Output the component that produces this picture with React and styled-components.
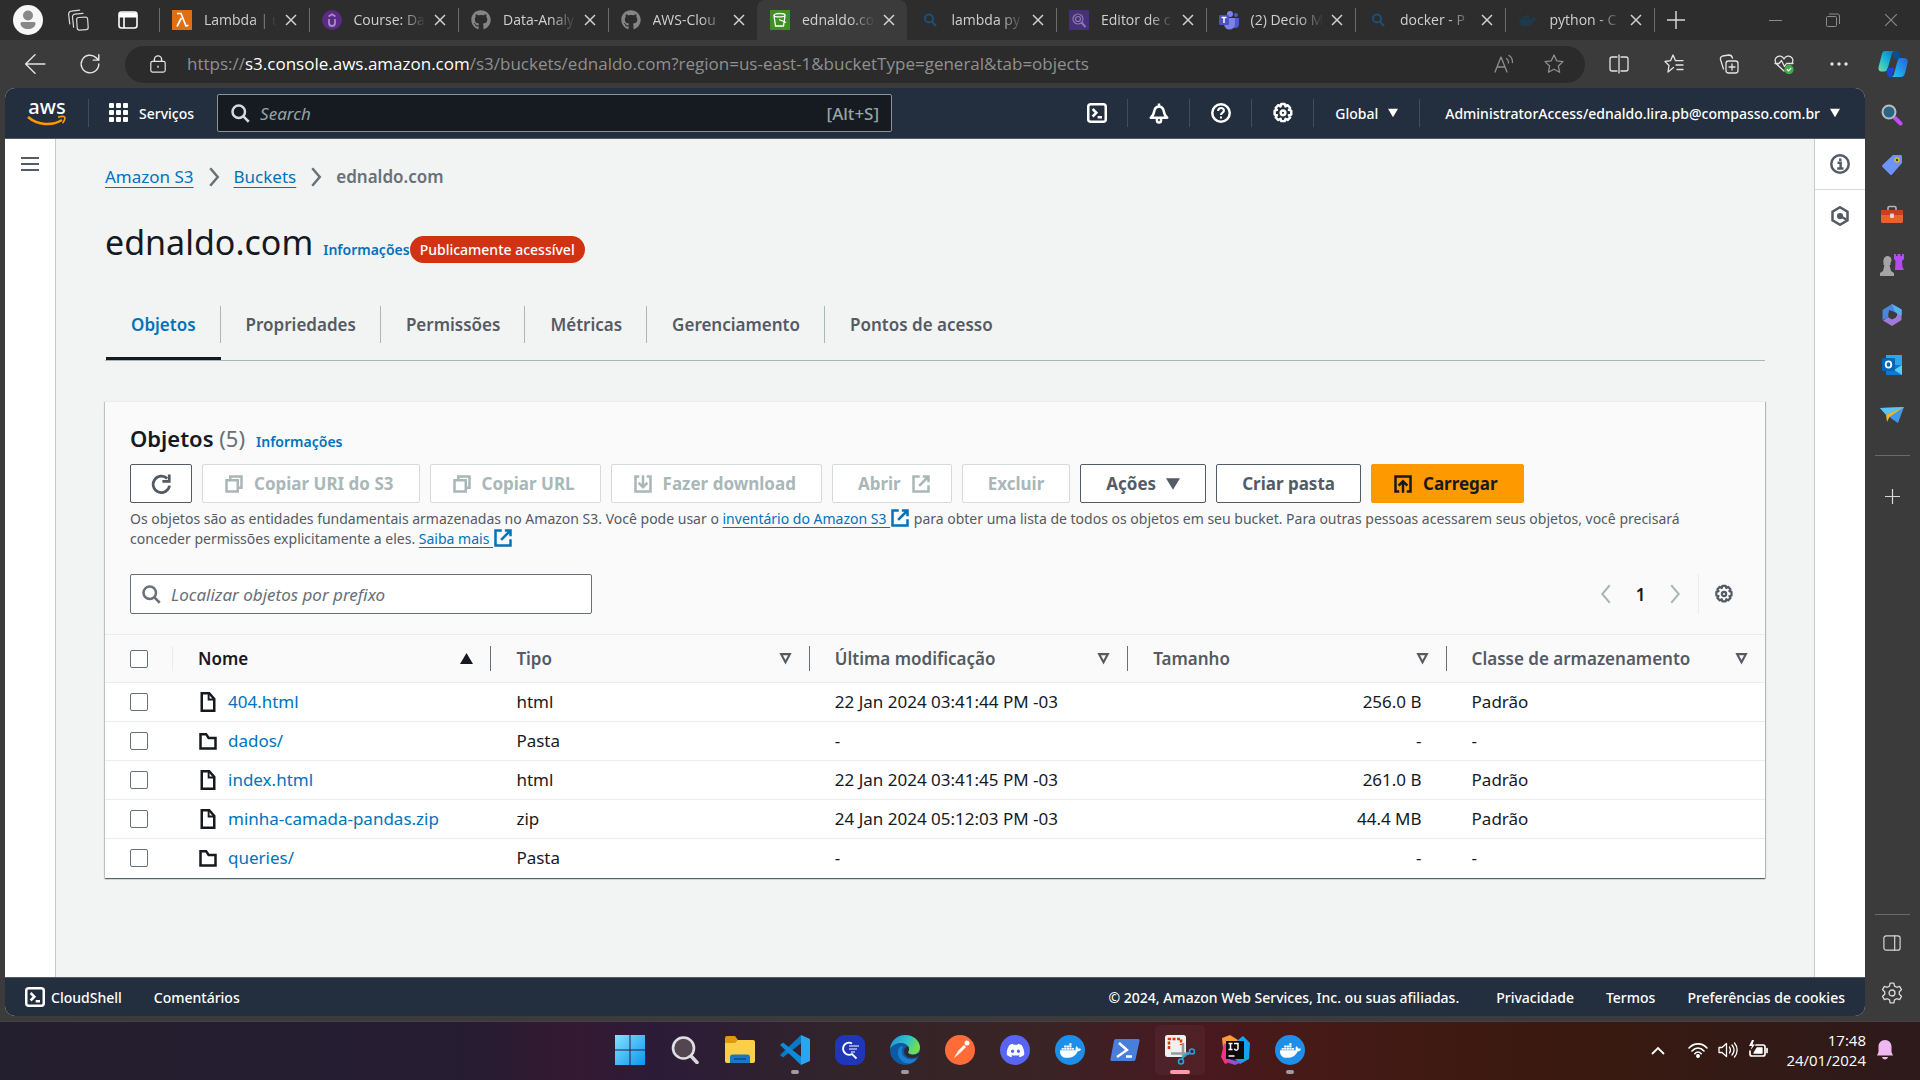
import React from "react";
import styled, { createGlobalStyle, css } from "styled-components";
import { FaGithub, FaDocker, FaDiscord } from "react-icons/fa";

const ember = `"Noto Sans", "Open Sans", sans-serif`;
const segoe = `"Open Sans", "Noto Sans", sans-serif`;

const c = {
  navy: "#232f3e",
  ink: "#16191f",
  grey: "#545b64",
  mid: "#687078",
  link: "#0073bb",
  disabled: "#aab7b8",
  rule: "#eaeded",
  chrome: "#3b3b3b",
};

const GlobalStyle = createGlobalStyle`
  *, *::before, *::after { box-sizing: border-box; }
  body { margin: 0; background: #3b3b3b; font-family: ${ember}; color: ${c.ink}; }
  button { font: inherit; color: inherit; background: none; border: 0; padding: 0; margin: 0; }
  svg { display: block; flex: none; }
  a { color: ${c.link}; text-decoration: none; }
`;

/* ---------- icons ---------- */

const Icon = ({ size = 20, sw = 2, children, ...rest }) => (
  <svg width={size} height={size} viewBox="0 0 16 16" fill="none" stroke="currentColor" strokeWidth={sw} aria-hidden="true" {...rest}>
    {children}
  </svg>
);

const CopyIcon = () => (
  <Icon>
    <path d="M2 5h9v9H2z" />
    <path d="M5 5V2h9v9h-3" />
  </Icon>
);
const DownloadIcon = () => (
  <Icon>
    <path d="M5 2H2v12h12V2h-3" />
    <path d="M8 1v9M4.500 7 8 10.500 11.500 7" />
  </Icon>
);
const UploadIcon = () => (
  <Icon>
    <path d="M5 14H2V2h12v12h-3" />
    <path d="M8 15V6M4.500 9.300 8 5.800l3.500 3.500" />
  </Icon>
);
const ExternalIcon = ({ size }) => (
  <Icon size={size}>
    <path d="M7 2H2v12h12V9" />
    <path d="M9.500 2H14v4.500M14 2 6.500 9.500" />
  </Icon>
);
const RefreshIcon = () => (
  <Icon size={22}>
    <path d="M14.200 9.200A6 6 0 1 1 12.500 4" />
    <path d="M14 1v5H9" />
  </Icon>
);
const SearchIcon = ({ size = 20 }) => (
  <Icon size={size}>
    <circle cx="7" cy="7" r="5" />
    <path d="m10.700 10.700 4.300 4.300" />
  </Icon>
);
const GearIcon = ({ size = 22 }) => (
  <Icon size={size} sw={1.8} strokeLinejoin="round">
    <path d="M6.700 1.500h2.600l.5 1.700 1.500-.9 1.900 1.900-.9 1.500 1.700.6v2.800l-1.700.5.9 1.600-1.900 1.900-1.500-.9-.5 1.700H6.700l-.5-1.700-1.600.9-1.900-1.900.9-1.600-1.700-.5V6.300l1.700-.6-.9-1.500 1.900-1.900 1.600.9z" />
    <circle cx="8" cy="7.900" r="1.700" />
  </Icon>
);
const FileIcon = () => (
  <Icon>
    <path d="M3 1h6l4 4.500V15H3z" />
    <path d="M8.500 1v5H13" strokeWidth="1.500" />
  </Icon>
);
const FolderIcon = () => (
  <Icon>
    <path d="M2 2.500h4.500l2 3H14V14H2z" />
  </Icon>
);
const ShellIcon = () => (
  <Icon>
    <rect x="1" y="1" width="14" height="14" rx="2" />
    <path d="m4.500 4.800 3 3-3 3M8.500 11.300H12" />
  </Icon>
);
const BellIcon = () => (
  <Icon size={22} sw={1.8}>
    <path d="M8 1v1.500M2 11.500c2-1.500 2.300-3.500 2.700-5.500C5.200 4.300 6.300 3.300 8 3.300S10.800 4.300 11.300 6c.4 2 .7 4 2.700 5.500z" strokeLinejoin="round" />
    <path d="M6.500 12v1.500a1.500 1.500 0 0 0 3 0V12" />
  </Icon>
);
const HelpIcon = () => (
  <Icon>
    <circle cx="8" cy="8" r="7" />
    <path d="M5.700 6.300C5.700 4.800 6.700 4 8 4s2.300.8 2.300 2.100C10.300 7.600 8 7.700 8 9.500M8 10.700v1.700" strokeWidth="1.700" />
  </Icon>
);
const InfoIcon = () => (
  <Icon>
    <circle cx="8" cy="8" r="7" />
    <path d="M6 7h2.500v4.500M5.800 11.500h5M7.200 4.500h2" />
  </Icon>
);
const HexIcon = () => (
  <Icon>
    <path d="m8 1 6 3.500v7L8 15l-6-3.500v-7z" />
    <circle cx="8" cy="8" r="1.500" fill="currentColor" />
    <path d="m8.500 8.200 4.500 2.600" />
  </Icon>
);
const Chevron = ({ left, size = 20, sw = 2 }) => (
  <Icon size={size} sw={sw}>
    <path d={left ? "M11 1 5 8l6 7" : "m5 1 6 7-6 7"} />
  </Icon>
);
const Caret = ({ up, hollow, size = 12 }) => (
  <svg width={size} height={size} viewBox="0 0 12 12" aria-hidden="true">
    {hollow ? (
      <path d="M2 2h8L6 9.500z" fill="none" stroke="currentColor" strokeWidth="2" />
    ) : (
      <path d={up ? "M0 11h12L6 1z" : "M0 1h12L6 11z"} fill="currentColor" />
    )}
  </svg>
);
const GridIcon = () => (
  <svg width="20" height="20" viewBox="0 0 20 20" fill="#fff" aria-hidden="true">
    {[0, 7, 14].map((y) => [0, 7, 14].map((x) => <rect key={x + "-" + y} x={x} y={y} width="5" height="5" rx="1" />))}
  </svg>
);

const Thin = ({ size = 20, children, ...rest }) => (
  <svg width={size} height={size} viewBox="0 0 20 20" fill="none" stroke="currentColor" strokeWidth="1.300" strokeLinecap="round" strokeLinejoin="round" aria-hidden="true" {...rest}>
    {children}
  </svg>
);
const CrossIcon = ({ size = 12, sw = 1.5 }) => (
  <svg width={size} height={size} viewBox="0 0 12 12" stroke="currentColor" strokeWidth={sw} aria-hidden="true">
    <path d="m1 1 10 10M11 1 1 11" />
  </svg>
);
const PlusIcon = ({ size = 16 }) => (
  <svg width={size} height={size} viewBox="0 0 16 16" stroke="currentColor" strokeWidth="1.300" aria-hidden="true">
    <path d="M8 0v16M0 8h16" />
  </svg>
);

/* ---------- browser tab strip ---------- */

const Screen = styled.div`
  display: flex;
  flex-direction: column;
  min-height: 100vh;
`;

const TabStrip = styled.div`
  display: flex;
  align-items: center;
  height: 40px;
  background: #2d2d2d;
  color: #d0d0d0;
  font-family: ${segoe};
`;

const StripTools = styled.div`
  display: flex;
  padding: 0 6px 0 3px;
`;

const StripButton = styled.button`
  display: flex;
  align-items: center;
  justify-content: center;
  width: ${(p) => p.$w || 50}px;
  height: 40px;
  color: ${(p) => (p.$dim ? "#8c8c8c" : "#d8d8d8")};
`;

const TabList = styled.div`
  display: flex;
  flex: 1;
  min-width: 0;
`;

const Tab = styled.div`
  display: flex;
  align-items: center;
  gap: 12px;
  flex: 1 1 0;
  min-width: 0;
  height: 40px;
  padding: 0 12px 0 0;
  border-radius: 8px 8px 0 0;
  background: ${(p) => (p.$active ? c.chrome : "transparent")};

  &::before {
    content: "";
    width: 1px;
    height: 24px;
    background: ${(p) => (p.$bare ? "transparent" : "#6c6c6c")};
  }
`;

const TabTitle = styled.button`
  flex: 1 0 0;
  min-width: 0;
  margin-right: -4px;
  text-align: left;
  font-size: 14px;
  line-height: 24px;
  white-space: nowrap;
  mask-image: linear-gradient(90deg, #000 66%, transparent 100%);
`;

const StripRule = styled.span`
  width: 1px;
  height: 24px;
  background: #6c6c6c;
`;

const WindowControls = styled.div`
  display: flex;
  margin-left: 49px;
`;

const Favicon = styled.span`
  display: flex;
  align-items: center;
  justify-content: center;
  flex: none;
  width: 20px;
  height: 20px;
`;

const LambdaFav = () => (
  <svg width="20" height="20" viewBox="0 0 20 20">
    <rect width="20" height="20" fill="#e06f14" />
    <path d="M5 3.500h4L14 16l2.500-.8M9.300 8 5 16.500" fill="none" stroke="#fff" strokeWidth="1.700" />
  </svg>
);
const UdemyFav = () => (
  <svg width="20" height="20" viewBox="0 0 20 20">
    <circle cx="10" cy="10" r="10" fill="#5b2a86" />
    <path d="M7 9v4a3 3 0 0 0 6 0V9M6.500 6.500 10 4.300l3.500 2.200" fill="none" stroke="#a78cc0" strokeWidth="1.800" />
  </svg>
);
const BucketFav = () => (
  <svg width="20" height="20" viewBox="0 0 20 20">
    <rect width="20" height="20" fill="#3f9024" />
    <path d="M4 5.500 5.500 16h8L15 5.500M9 9.500l7 3" fill="none" stroke="#fff" strokeWidth="1.300" />
    <ellipse cx="9.500" cy="5.200" rx="5.500" ry="1.700" fill="none" stroke="#fff" strokeWidth="1.300" />
  </svg>
);
const LensFav = () => (
  <svg width="14" height="14" viewBox="0 0 14 14" fill="none" stroke="#1d4f7c" strokeWidth="2">
    <circle cx="6" cy="5.500" r="4" />
    <path d="m9 8.500 4 4.500" />
  </svg>
);
const AthenaFav = () => (
  <svg width="20" height="20" viewBox="0 0 20 20" fill="none" stroke="#8d7ba8" strokeWidth="1.200">
    <rect width="20" height="20" fill="#46307a" stroke="none" />
    <circle cx="9" cy="9" r="5" />
    <circle cx="9" cy="9" r="2.500" />
    <path d="m12.500 12.500 4 4.500" strokeWidth="2" />
  </svg>
);
const TeamsFav = () => (
  <svg width="20" height="20" viewBox="0 0 20 20">
    <circle cx="11" cy="4" r="3" fill="#7b83eb" />
    <circle cx="17" cy="5" r="2" fill="#5059c9" />
    <path d="M6 8h14v6a4 4 0 0 1-4 4H10z" fill="#5059c9" />
    <path d="M5 8h11v6a5.500 5.500 0 0 1-11 0z" fill="#7b83eb" />
    <rect y="5" width="10" height="10" rx="1" fill="#4b53bc" />
    <path d="M2.500 7.500h5M5 7.500V13" stroke="#fff" strokeWidth="1.500" />
  </svg>
);

const tabs = [
  { title: "Lambda | u", icon: <LambdaFav /> },
  { title: "Course: Da", icon: <UdemyFav /> },
  { title: "Data-Analy", icon: <FaGithub size={20} color="#858585" /> },
  { title: "AWS-Clou", icon: <FaGithub size={20} color="#858585" /> },
  { title: "ednaldo.co", icon: <BucketFav />, active: true },
  { title: "lambda py", icon: <LensFav />, bare: true },
  { title: "Editor de c", icon: <AthenaFav /> },
  { title: "(2) Decio M", icon: <TeamsFav /> },
  { title: "docker - P", icon: <LensFav /> },
  { title: "python - C", icon: <FaDocker size={18} color="#1d3b4e" /> },
];

const Strip = () => (
  <TabStrip>
    <StripTools>
      <StripButton aria-label="Perfil">
        <svg width="30" height="30" viewBox="0 0 30 30">
          <circle cx="15" cy="15" r="15" fill="#f7f7f7" />
          <circle cx="15" cy="10.500" r="5" fill="#888" />
          <path d="M7.500 18.500a1.500 1.500 0 0 1 1.500-1.500h12a1.500 1.500 0 0 1 1.500 1.500c0 3.500-3.500 5.500-7.500 5.500s-7.500-2-7.500-5.500z" fill="#888" />
        </svg>
      </StripButton>
      <StripButton aria-label="Workspaces">
        <Thin size={22} strokeWidth="1.100">
          <rect x="9" y="7.500" width="10" height="11.500" rx="2" transform="rotate(-4 14 13)" />
          <path d="M6 16.500 5 7.500A2.500 2.500 0 0 1 7.200 4.700L14.500 4M2.500 13.500 1.500 5A2.700 2.700 0 0 1 4 2l7.500-1" />
        </Thin>
      </StripButton>
      <StripButton aria-label="Guias verticais">
        <svg width="20" height="20" viewBox="0 0 20 20" fill="none" stroke="#fff" strokeWidth="1.600">
          <rect x="1" y="2" width="18" height="16" rx="2.500" />
          <path d="M1 5h18" strokeWidth="5" />
          <path d="M6 5v13" />
        </svg>
      </StripButton>
    </StripTools>
    <TabList role="tablist" aria-label="Guias do navegador">
      {tabs.map((t) => (
        <Tab key={t.title} $active={t.active} $bare={t.active || t.bare}>
          <Favicon>{t.icon}</Favicon>
          <TabTitle role="tab" aria-selected={!!t.active}>
            {t.title}
          </TabTitle>
          <button aria-label="Fechar guia">
            <CrossIcon />
          </button>
        </Tab>
      ))}
    </TabList>
    <StripRule />
    <StripButton $w={42} aria-label="Nova guia">
      <PlusIcon size={18} />
    </StripButton>
    <WindowControls>
      <StripButton $w={58} $dim aria-label="Minimizar">
        <svg width="13" height="13" viewBox="0 0 13 13" stroke="currentColor">
          <path d="M0 6.500h13" />
        </svg>
      </StripButton>
      <StripButton $w={58} $dim aria-label="Restaurar">
        <svg width="14" height="14" viewBox="0 0 14 14" fill="none" stroke="currentColor">
          <rect x=".5" y="3.500" width="10" height="10" rx="1" />
          <path d="M3 1h8.500a2 2 0 0 1 2 2v8" />
        </svg>
      </StripButton>
      <StripButton $w={58} $dim aria-label="Fechar">
        <CrossIcon size={14} sw={0.9} />
      </StripButton>
    </WindowControls>
  </TabStrip>
);

/* ---------- address bar ---------- */

const Toolbar = styled.div`
  display: flex;
  align-items: center;
  height: 48px;
  padding-left: 7px;
  background: ${c.chrome};
  color: #e4e4e4;
  font-family: ${segoe};
`;

const ToolButton = styled.button`
  display: flex;
  align-items: center;
  justify-content: center;
  width: ${(p) => p.$w || 55}px;
  height: 37px;
  color: ${(p) => (p.$dim ? "#8f8f8f" : "inherit")};
`;

const Address = styled.div`
  display: flex;
  align-items: center;
  flex: 1;
  min-width: 0;
  height: 37px;
  margin: 0 6px 0 8px;
  padding: 0 6px 0 24px;
  border-radius: 19px;
  background: #2b2b2b;
`;

const Url = styled.div`
  flex: 1;
  min-width: 0;
  margin-left: 20px;
  overflow: hidden;
  white-space: nowrap;
  font-size: 17px;
  line-height: 30px;
  color: #909090;

  strong {
    font-weight: 400;
    color: #fff;
  }
`;

const AddressBar = () => (
  <Toolbar>
    <ToolButton aria-label="Voltar">
      <Thin size={22}>
        <path d="M19 10H1.500M10 1.500 1.500 10l8.500 8.500" />
      </Thin>
    </ToolButton>
    <ToolButton aria-label="Atualizar">
      <Thin size={22}>
        <path d="M18 10a8 8 0 1 1-2.500-5.800L18 6.500M18 1.500v5h-5" />
      </Thin>
    </ToolButton>
    <Address>
      <Thin size={18}>
        <rect x="2" y="7" width="16" height="12" rx="2" />
        <path d="M6 7V5a4 4 0 0 1 8 0v2M10 12.500v1" strokeWidth="1.600" />
      </Thin>
      <Url role="textbox" aria-label="Endereço">
        https://<strong>s3.console.aws.amazon.com</strong>/s3/buckets/ednaldo.com?region=us-east-1&amp;bucketType=general&amp;tab=objects
      </Url>
      <ToolButton $w={50} $dim aria-label="Ler em voz alta">
        <Thin>
          <path d="M1 18 7 3l6 15M3 13h8M12.500 4.500c1.500 1 2 2.500 2 4.500M15 1.500c2.500 1.500 3.500 4 3.500 7" />
        </Thin>
      </ToolButton>
      <ToolButton $w={50} $dim aria-label="Adicionar aos favoritos">
        <Thin>
          <path d="m10 1 2.700 5.800 6.300.8-4.600 4.400 1.200 6.300L10 15.200l-5.600 3.100L5.600 12 1 7.600l6.300-.8z" />
        </Thin>
      </ToolButton>
    </Address>
    <ToolButton aria-label="Dividir tela">
      <Thin>
        <path d="M8 3H3a2 2 0 0 0-2 2v10a2 2 0 0 0 2 2h5M12 3h5a2 2 0 0 1 2 2v10a2 2 0 0 1-2 2h-5M10 1v18" />
      </Thin>
    </ToolButton>
    <ToolButton aria-label="Favoritos">
      <Thin>
        <path d="M9.500 13.500 4 18l1-6.500L1 7.500l5.500-.8L9 1l2.500 5.700H19M12 11h7M13 15.500h6" />
      </Thin>
    </ToolButton>
    <ToolButton aria-label="Coleções">
      <Thin>
        <rect x="7" y="7" width="12" height="12" rx="2.500" />
        <path d="M13 10v6M10 13h6M4.500 15 1.500 5.500A3 3 0 0 1 3.500 2L10 1c2 0 3 1 3.500 3" />
      </Thin>
    </ToolButton>
    <ToolButton aria-label="Desempenho">
      <Thin>
        <path d="M10 17 2 9.500C-.5 5 3 1.500 6.500 2.200 8.500 2.600 9.500 4 10 5c.5-1 1.500-2.400 3.500-2.800C17 1.500 20.500 5 18 9.500M1 9.500h4l2.500-3 3 6 2-3H19" />
        <circle cx="15" cy="15.500" r="4" fill="#3fae49" stroke="#3fae49" />
        <path d="m13.200 15.500 1.300 1.400 2.300-2.500" stroke="#fff" />
      </Thin>
    </ToolButton>
    <ToolButton aria-label="Mais">
      <svg width="18" height="4" viewBox="0 0 18 4" fill="currentColor">
        <circle cx="2" cy="2" r="1.700" />
        <circle cx="9" cy="2" r="1.700" />
        <circle cx="16" cy="2" r="1.700" />
      </svg>
    </ToolButton>
    <ToolButton $w={54} aria-label="Copilot">
      <svg width="30" height="28" viewBox="0 0 30 28">
        <defs>
          <linearGradient id="cp1" x1="0" y1="1" x2="1" y2="0">
            <stop offset="0" stopColor="#6fe09a" />
            <stop offset=".5" stopColor="#18b5d8" />
            <stop offset="1" stopColor="#0a6fc2" />
          </linearGradient>
          <linearGradient id="cp2" x1="0" y1="1" x2="1" y2="0">
            <stop offset="0" stopColor="#22c8f6" />
            <stop offset="1" stopColor="#2264d8" />
          </linearGradient>
        </defs>
        <path d="M13 1h6c2 0 3 2 3.500 5l.5 3h-6z" fill="#0d4f8c" />
        <path d="M7 1h10c-2 0-2.700 1-3.200 3l-4 14c-.7 2.500-1.600 3.500-3.300 3.500H4c-3 0-4-2-3.300-5L4 4c.5-2 1.500-3 3-3z" fill="url(#cp1)" />
        <path d="m8.500 21 1-3h7l-3 9H12c-2 0-3-1.500-3.500-6z" fill="#1a45d6" />
        <path d="M23 27H13c1.500 0 2.500-1 3-3l3.500-13c.5-2 1.500-3 3-3h3.500c3 0 4.500 2 3.500 5L27 23c-.6 2.500-2 4-4 4z" fill="url(#cp2)" />
      </svg>
    </ToolButton>
  </Toolbar>
);

/* ---------- side bar of the browser ---------- */

const Middle = styled.div`
  display: flex;
  flex: 1;
  padding-left: 5px;
  background: ${c.chrome};
`;

const SideBar = styled.aside`
  display: flex;
  flex-direction: column;
  align-items: center;
  width: 55px;
  padding: 2px 1px 3px 0;
  color: #d8d8d8;
`;

const SideButton = styled.button`
  display: flex;
  align-items: center;
  justify-content: center;
  width: 54px;
  height: 50px;
`;

const SideRule = styled.hr`
  width: 35px;
  height: 1px;
  margin: ${(p) => (p.$tight ? "0 0 3px" : "15px 0")};
  border: 0;
  background: #6a6a6a;
`;

const SideSpacer = styled.div`
  flex: 1;
`;

const Side = () => (
  <SideBar>
    <SideButton aria-label="Pesquisar">
      <svg width="22" height="22" viewBox="0 0 22 22">
        <path d="m14 14 5.500 5.500" stroke="#c04cf5" strokeWidth="4" strokeLinecap="round" />
        <circle cx="8" cy="8" r="6.500" fill="#2a6585" stroke="#b9bdc0" strokeWidth="2" />
      </svg>
    </SideButton>
    <SideButton aria-label="Compras">
      <svg width="22" height="22" viewBox="0 0 22 22">
        <path d="M12 1h7c1.500 0 2 .5 2 2v6L11 20.500c-.6.7-1.200.7-2 0L1.500 13c-.6-.7-.6-1.300 0-2z" fill="#6c93f5" />
        <circle cx="16" cy="6" r="2" fill="#3b3b3b" stroke="#f2b51c" strokeWidth="1.500" />
      </svg>
    </SideButton>
    <SideButton aria-label="Ferramentas">
      <svg width="24" height="20" viewBox="0 0 24 20">
        <path d="M8 6V3a1.500 1.500 0 0 1 1.500-1.500h5A1.500 1.500 0 0 1 16 3v3" fill="none" stroke="#b4b4b4" strokeWidth="1.600" />
        <rect x="1" y="5" width="22" height="13" rx="1.500" fill="#e8622f" />
        <rect x="1" y="5" width="22" height="5" rx="1" fill="#c8401c" />
        <rect x="10" y="8.500" width="4" height="4.500" rx="1" fill="#d8d8d8" />
      </svg>
    </SideButton>
    <SideButton aria-label="Jogos">
      <svg width="24" height="24" viewBox="0 0 24 24">
        <path d="M14 1h2v2h1.500V1h3v2H22V1h2v5l-2 2 .5 6 1.500 3h-9l.5-9L14 6z" fill="#b24cf0" />
        <path d="M3.500 7a4 4 0 1 1 7 2.700V12h-1l1.500 6 3 2v3H0v-3l3-2 1.500-6h-1V9.700A4 4 0 0 1 3.500 7z" fill="#a5a5a5" />
      </svg>
    </SideButton>
    <SideButton aria-label="Microsoft 365">
      <svg width="22" height="22" viewBox="0 0 22 22">
        <path d="m11 0 9.500 5.500v6L14 8.500 8 6 7.500 13 1.500 16V6z" fill="#4a86dc" />
        <path d="M20.500 5.500V16L11 22l-9-5.500 6-4 3 2.500 5-3V8z" fill="#a07ad8" />
        <path d="m11 0 9.500 5.500v6L14 8z" fill="#53b4ec" />
        <path d="m11 7 4 2v4.500l-4 2-3.500-2V9z" fill="#3b3b3b" />
      </svg>
    </SideButton>
    <SideButton aria-label="Outlook">
      <svg width="22" height="22" viewBox="0 0 22 22">
        <rect x="5" y="1" width="16" height="12" fill="#28a8ea" />
        <path d="M5 11h16v10H5z" fill="#0f78d4" />
        <path d="m21 11-8 5 8 5z" fill="#50d0ff" />
        <rect x="1" y="4" width="13" height="13" rx="1" fill="#0364b8" />
        <ellipse cx="7.500" cy="10.500" rx="2.800" ry="3.200" fill="none" stroke="#fff" strokeWidth="1.800" />
      </svg>
    </SideButton>
    <SideButton aria-label="Drop">
      <svg width="24" height="18" viewBox="0 0 24 18">
        <path d="M0 2 24 1 18 17l-6-4z" fill="#3f9bea" />
        <path d="M0 2 24 1 6 9z" fill="#5cc4f5" />
        <path d="M24 1 6 9l1 7 2.500-5z" fill="#f2b51c" />
      </svg>
    </SideButton>
    <SideRule />
    <SideButton aria-label="Personalizar">
      <PlusIcon size={15} />
    </SideButton>
    <SideSpacer />
    <SideRule $tight />
    <SideButton aria-label="Painel lateral">
      <Thin size={18}>
        <rect x="1" y="2" width="18" height="16" rx="2.500" />
        <path d="M13 2v16" />
      </Thin>
    </SideButton>
    <SideButton aria-label="Configurações">
      <Thin size={22} strokeWidth="1.200">
        <path d="M8.300 1h3.400l.6 2.700 2 1.100 2.600-.8 1.700 3-2 1.800v2.400l2 1.800-1.700 3-2.600-.8-2 1.100-.6 2.700H8.300l-.6-2.700-2-1.100-2.600.8-1.700-3 2-1.800V8.800l-2-1.800 1.700-3 2.600.8 2-1.100z" />
        <circle cx="10" cy="10" r="2.700" />
      </Thin>
    </SideButton>
  </SideBar>
);

/* ---------- AWS console frame ---------- */

const Frame = styled.div`
  display: flex;
  flex-direction: column;
  flex: 1;
  min-width: 0;
  margin-bottom: 5px;
  overflow: hidden;
  border-radius: 10px;
  background: #f2f3f3;
`;

const Header = styled.header`
  display: flex;
  align-items: center;
  height: 51px;
  padding-left: 22px;
  border-bottom: 1px solid ${c.grey};
  background: ${c.navy};
  color: #fff;
  font-size: 14px;
  font-weight: 500;
`;

const Logo = styled.a`
  display: flex;
  flex-direction: column;
  align-items: center;
  width: 40px;
  color: #fff;
  font-size: 20px;
  font-weight: 500;
  line-height: 16px;
`;

const Services = styled.button`
  display: flex;
  align-items: center;
  gap: 10px;
  height: 28px;
  margin-left: 21px;
  padding: 0 23px 0 20px;
  border-left: 1px solid #414d5c;
`;

const HeaderSearch = styled.label`
  display: flex;
  align-items: center;
  flex: 1;
  max-width: 675px;
  height: 38px;
  padding: 0 12px;
  border: 1px solid #879596;
  border-radius: 2px;
  background: #161a21;
  color: #95a5a6;
  font-size: 17px;

  svg {
    color: #d5dbdb;
  }
`;

const PlainInput = styled.input`
  flex: 1;
  min-width: 0;
  height: 36px;
  margin-left: 10px;
  padding: 0;
  border: 0;
  outline: 0;
  background: transparent;
  color: inherit;
  font-family: inherit;
  font-size: 17px;

  &::placeholder {
    color: inherit;
    font-style: italic;
    opacity: 1;
  }
`;

const HeaderNav = styled.nav`
  display: flex;
  margin-left: auto;
`;

const HeaderItem = styled.button`
  display: flex;
  align-items: center;
  justify-content: center;
  gap: 10px;
  height: 28px;
  min-width: 62px;
  padding: 0 ${(p) => p.$pad || 0}px;
  border-right: ${(p) => (p.$last ? "0" : "1px solid #414d5c")};
  white-space: nowrap;
`;

const Body = styled.div`
  display: flex;
  flex: 1;
`;

const Rail = styled.div`
  width: 51px;
  background: #fff;
  border: 0 solid #c5cbcc;
  border-${(p) => p.$edge}-width: 1px;
`;

const RailButton = styled.button`
  display: flex;
  align-items: center;
  justify-content: center;
  width: 100%;
  height: 51px;
  color: ${c.grey};
  border-bottom: ${(p) => (p.$line ? "1px solid #d5dbdb" : "0")};
`;

const Main = styled.main`
  flex: 1;
  min-width: 0;
  padding: 25px 49px 60px;
`;

const Crumbs = styled.nav`
  display: flex;
  align-items: center;
  gap: 10px;
  font-size: 17px;
  line-height: 25px;
  color: ${c.mid};

  a {
    text-decoration: underline;
    text-underline-offset: 4px;
  }
  strong {
    font-weight: 600;
  }
`;

const TitleRow = styled.div`
  display: flex;
  align-items: baseline;
  margin-top: 31px;
`;

const Title = styled.h1`
  margin: 0 10px 0 0;
  font-size: 34px;
  font-weight: 400;
  line-height: 45px;
`;

const InfoLink = styled.a`
  font-size: 14px;
  font-weight: 600;
  line-height: 20px;
`;

const Badge = styled.span`
  padding: 0 10px;
  border-radius: 14px;
  background: #d13212;
  color: #fff;
  font-size: 14px;
  font-weight: 500;
  line-height: 27px;
`;

const PageTabs = styled.div`
  display: flex;
  align-items: stretch;
  height: 71px;
  margin-top: 25px;
  padding-left: 1px;
  border-bottom: 1px solid #aab7b8;
`;

const PageTab = styled.button`
  display: flex;
  align-items: center;
  padding-top: 2px;
  color: ${(p) => (p.$active ? c.link : c.grey)};
  font-size: 17px;
  font-weight: 600;
  border-bottom: 3px solid ${(p) => (p.$active ? c.ink : "transparent")};

  span {
    padding: 0 24px 0 25px;
    line-height: 37px;
    border-right: ${(p) => (p.$last ? "0" : "1px solid #aab7b8")};
  }
`;

const Card = styled.section`
  margin-top: 40px;
  border-top: 1px solid ${c.rule};
  background: #fff;
  box-shadow: 0 1px 1px 0 rgba(0, 28, 36, 0.5), 1px 1px 1px 0 rgba(0, 28, 36, 0.2), -1px 1px 1px 0 rgba(0, 28, 36, 0.15);
`;

const CardHead = styled.div`
  padding: 21px 25px 20px;
  background: #fafafa;
`;

const CardTitle = styled.h2`
  display: inline;
  margin: 0 11px 0 0;
  font-size: 22px;
  font-weight: 600;
  line-height: 30px;

  span {
    font-weight: 400;
    color: ${c.mid};
  }
`;

const Actions = styled.div`
  display: flex;
  flex-wrap: wrap;
  gap: 10px;
  margin-top: 11px;
`;

const variants = {
  normal: css`
    border-color: ${c.grey};
    color: ${c.grey};
  `,
  disabled: css`
    border-color: #d5dbdb;
    color: ${c.disabled};
  `,
  primary: css`
    border-color: #ff9900;
    background: #ff9900;
    color: ${c.ink};
  `,
};

const Button = styled.button`
  display: flex;
  align-items: center;
  gap: 10px;
  height: 39px;
  padding-left: ${(p) => (p.$icon === "start" ? 21 : p.$icon === "only" ? 19 : 25)}px;
  padding-right: ${(p) => (p.$icon === "end" ? 20 : p.$icon === "only" ? 19 : 25)}px;
  border: 1px solid;
  border-radius: 2px;
  background: #fff;
  font-size: 17px;
  font-weight: 700;
  line-height: 24px;
  white-space: nowrap;
  ${(p) => variants[p.$variant || "normal"]}
`;

const Description = styled.p`
  margin: 6px 0 0;
  color: ${c.grey};
  font-size: 14px;
  line-height: 20px;

  a {
    text-decoration: underline;
    text-underline-offset: 3px;
  }
  svg {
    display: inline-block;
    margin: -5px 0;
    vertical-align: 1px;
  }
`;

const FilterRow = styled.div`
  display: flex;
  align-items: center;
  justify-content: space-between;
  margin-top: 25px;
`;

const Filter = styled.label`
  display: flex;
  align-items: center;
  width: 462px;
  height: 40px;
  padding: 0 10px;
  border: 1px solid ${c.mid};
  border-radius: 2px;
  background: #fff;
  color: ${c.mid};
`;

const Pager = styled.div`
  display: flex;
  align-items: center;
  color: ${c.disabled};
  font-size: 17px;

  strong {
    width: 49px;
    text-align: center;
    font-weight: 600;
    color: ${c.ink};
  }
`;

const PagerGear = styled.button`
  display: flex;
  align-items: center;
  height: 40px;
  margin-left: 13px;
  padding: 0 6px 0 15px;
  border-left: 1px solid ${c.rule};
  color: ${c.grey};
`;

const Table = styled.table`
  width: 100%;
  table-layout: fixed;
  border-collapse: collapse;
  font-size: 17px;

  th {
    height: 48px;
    padding: 0;
    background: #fafafa;
    border-top: 1px solid ${c.rule};
    border-bottom: 1px solid ${c.rule};
    text-align: left;
  }
  td {
    height: 39px;
    padding: 0 25px;
    border-top: 1px solid ${c.rule};
    line-height: 24px;
    white-space: nowrap;
  }
`;

const CheckCol = styled.col`
  width: 68px;
`;

const HeadCell = styled.div`
  display: flex;
  align-items: center;
  justify-content: space-between;
  height: 25px;
  padding: 0 17px 0 25px;
  border-right: ${(p) => (p.$rule ? `1px solid ${p.$rule}` : "0")};
  color: ${(p) => (p.$sorted ? c.ink : c.grey)};
  font-weight: 600;
`;

const Check = styled.input`
  display: block;
  appearance: none;
  flex: none;
  width: 18px;
  height: 18px;
  margin: 0;
  border: 1px solid ${c.mid};
  border-radius: 2px;
  background: #fff;
`;

const NameCell = styled.div`
  display: flex;
  align-items: center;
  gap: 10px;
`;

const NumberCell = styled.td`
  text-align: right;
`;

const Footer = styled.footer`
  display: flex;
  align-items: center;
  height: 39px;
  padding: 0 20px;
  border-top: 1px solid ${c.grey};
  background: ${c.navy};
  color: #fff;
  font-size: 14px;
  font-weight: 500;

  a,
  button {
    display: flex;
    align-items: center;
    gap: 6px;
    margin-right: 32px;
    color: #fff;
  }
  a:last-child {
    margin-right: 0;
  }
`;

const Copyright = styled.span`
  margin: 0 37px 0 auto;
`;

const columns = ["Nome", "Tipo", "Última modificação", "Tamanho", "Classe de armazenamento"];
const rows = [
  ["404.html", "html", "22 Jan 2024 03:41:44 PM -03", "256.0 B", "Padrão"],
  ["dados/", "Pasta", "-", "-", "-"],
  ["index.html", "html", "22 Jan 2024 03:41:45 PM -03", "261.0 B", "Padrão"],
  ["minha-camada-pandas.zip", "zip", "24 Jan 2024 05:12:03 PM -03", "44.4 MB", "Padrão"],
  ["queries/", "Pasta", "-", "-", "-"],
];
const pageTabs = ["Objetos", "Propriedades", "Permissões", "Métricas", "Gerenciamento", "Pontos de acesso"];

const ConsoleHeader = () => (
  <Header>
    <Logo href="#" aria-label="AWS">
      <span>aws</span>
      <svg width="40" height="12" viewBox="0 0 40 12" fill="none" stroke="#ff9900">
        <path d="M1 2c10 8.500 24 9 34 3" strokeWidth="2.600" />
        <path d="M31 2.200c3-.9 6-.8 6.700 0 .7 1-.4 4-2.200 6" strokeWidth="1.600" />
      </svg>
    </Logo>
    <Services>
      <GridIcon />
      Serviços
    </Services>
    <HeaderSearch>
      <SearchIcon />
      <PlainInput type="search" placeholder="Search" aria-label="Search" />
      [Alt+S]
    </HeaderSearch>
    <HeaderNav>
      <HeaderItem aria-label="CloudShell">
        <ShellIcon />
      </HeaderItem>
      <HeaderItem aria-label="Notificações">
        <BellIcon />
      </HeaderItem>
      <HeaderItem aria-label="Ajuda">
        <HelpIcon />
      </HeaderItem>
      <HeaderItem aria-label="Configurações">
        <GearIcon />
      </HeaderItem>
      <HeaderItem $pad={21}>
        Global <Caret size={10} />
      </HeaderItem>
      <HeaderItem $pad={25} $last>
        AdministratorAccess/ednaldo.lira.pb@compasso.com.br <Caret size={10} />
      </HeaderItem>
    </HeaderNav>
  </Header>
);

const ObjectsTable = () => (
  <Table>
    <colgroup>
      <CheckCol />
      {columns.map((name) => (
        <col key={name} />
      ))}
    </colgroup>
    <thead>
      <tr>
        <th>
          <HeadCell $rule={c.rule}>
            <Check type="checkbox" aria-label="Selecionar todos" />
          </HeadCell>
        </th>
        {columns.map((name, i) => (
          <th key={name} scope="col">
            <HeadCell $sorted={i === 0} $rule={i < 4 ? c.mid : null}>
              {name}
              <Caret up={i === 0} hollow={i > 0} size={13} />
            </HeadCell>
          </th>
        ))}
      </tr>
    </thead>
    <tbody>
      {rows.map(([name, type, date, size, storage]) => (
        <tr key={name}>
          <td>
            <Check type="checkbox" aria-label={`Selecionar ${name}`} />
          </td>
          <td>
            <NameCell>
              {type === "Pasta" ? <FolderIcon /> : <FileIcon />}
              <a href="#">{name}</a>
            </NameCell>
          </td>
          <td>{type}</td>
          <td>{date}</td>
          <NumberCell>{size}</NumberCell>
          <td>{storage}</td>
        </tr>
      ))}
    </tbody>
  </Table>
);

const Console = () => (
  <Frame>
    <ConsoleHeader />
    <Body>
      <Rail $edge="right">
        <RailButton aria-label="Menu">
          <svg width="18" height="16" viewBox="0 0 18 16" stroke="currentColor" strokeWidth="2">
            <path d="M0 1h18M0 7h18M0 13h18" />
          </svg>
        </RailButton>
      </Rail>
      <Main>
        <Crumbs aria-label="Trilha">
          <a href="#">Amazon S3</a>
          <Chevron />
          <a href="#">Buckets</a>
          <Chevron />
          <strong>ednaldo.com</strong>
        </Crumbs>
        <TitleRow>
          <Title>ednaldo.com</Title>
          <InfoLink href="#">Informações</InfoLink>
          <Badge>Publicamente acessível</Badge>
        </TitleRow>
        <PageTabs role="tablist">
          {pageTabs.map((name, i) => (
            <PageTab key={name} role="tab" aria-selected={i === 0} $active={i === 0} $last={i === 5}>
              <span>{name}</span>
            </PageTab>
          ))}
        </PageTabs>
        <Card>
          <CardHead>
            <CardTitle>
              Objetos <span>(5)</span>
            </CardTitle>
            <InfoLink href="#">Informações</InfoLink>
            <Actions>
              <Button $icon="only" aria-label="Atualizar">
                <RefreshIcon />
              </Button>
              <Button $variant="disabled" disabled $icon="start">
                <CopyIcon /> Copiar URI do S3
              </Button>
              <Button $variant="disabled" disabled $icon="start">
                <CopyIcon /> Copiar URL
              </Button>
              <Button $variant="disabled" disabled $icon="start">
                <DownloadIcon /> Fazer download
              </Button>
              <Button $variant="disabled" disabled $icon="end">
                Abrir <ExternalIcon />
              </Button>
              <Button $variant="disabled" disabled>
                Excluir
              </Button>
              <Button>
                Ações <Caret size={14} />
              </Button>
              <Button>Criar pasta</Button>
              <Button $variant="primary" $icon="start">
                <UploadIcon /> Carregar
              </Button>
            </Actions>
            <Description>
              Os objetos são as entidades fundamentais armazenadas no Amazon S3. Você pode usar o{" "}
              <a href="#">
                inventário do Amazon S3 <ExternalIcon size={20} />
              </a>{" "}
              para obter uma lista de todos os objetos em seu bucket. Para outras pessoas acessarem seus objetos, você precisará
              conceder permissões explicitamente a eles.{" "}
              <a href="#">
                Saiba mais <ExternalIcon size={20} />
              </a>
            </Description>
            <FilterRow>
              <Filter>
                <SearchIcon />
                <PlainInput type="search" placeholder="Localizar objetos por prefixo" aria-label="Localizar objetos por prefixo" />
              </Filter>
              <Pager>
                <button aria-label="Página anterior">
                  <Chevron left sw={1.6} />
                </button>
                <strong>1</strong>
                <button aria-label="Próxima página">
                  <Chevron sw={1.6} />
                </button>
                <PagerGear aria-label="Preferências">
                  <GearIcon size={20} />
                </PagerGear>
              </Pager>
            </FilterRow>
          </CardHead>
          <ObjectsTable />
        </Card>
      </Main>
      <Rail $edge="left">
        <RailButton $line aria-label="Informações">
          <InfoIcon />
        </RailButton>
        <RailButton aria-label="Tutoriais">
          <HexIcon />
        </RailButton>
      </Rail>
    </Body>
    <Footer>
      <button>
        <ShellIcon /> CloudShell
      </button>
      <a href="#">Comentários</a>
      <Copyright>© 2024, Amazon Web Services, Inc. ou suas afiliadas.</Copyright>
      <a href="#">Privacidade</a>
      <a href="#">Termos</a>
      <a href="#">Preferências de cookies</a>
    </Footer>
  </Frame>
);

/* ---------- Windows taskbar ---------- */

const Taskbar = styled.div`
  display: grid;
  grid-template-columns: 1fr auto 1fr;
  align-items: center;
  height: 59px;
  padding-bottom: 2px;
  border-top: 1px solid #4a3f48;
  background: linear-gradient(
    90deg,
    #241f2e 0%,
    #251c31 24%,
    #341a32 30%,
    #2c1b38 34%,
    #32242a 44%,
    #3a2425 54%,
    #48181f 62%,
    #461a17 68%,
    #39190f 82%,
    #2d1a1b 100%
  );
  color: #fff;
  font-family: ${segoe};
`;

const Apps = styled.div`
  display: flex;
  grid-column: 2;
  gap: 5px;
`;

const AppButton = styled.button`
  position: relative;
  display: flex;
  align-items: center;
  justify-content: center;
  width: 50px;
  height: 50px;
  border-radius: 5px;
  background: ${(p) => (p.$state === "focus" ? "rgba(255,255,255,.04)" : "transparent")};

  &::after {
    content: "";
    position: absolute;
    bottom: 1px;
    width: ${(p) => (p.$state === "focus" ? 20 : p.$state === "open" ? 8 : 0)}px;
    height: 4px;
    border-radius: 2px;
    background: ${(p) => (p.$state === "focus" ? "#ff99a4" : "#a49a9c")};
  }
`;

const Disc = styled.span`
  display: flex;
  align-items: center;
  justify-content: center;
  width: 30px;
  height: 30px;
  border-radius: ${(p) => p.$r || "50%"};
  background: ${(p) => p.$bg};
`;

const Tray = styled.div`
  display: flex;
  align-items: center;
  justify-content: flex-end;
  gap: 10px;
  padding-right: 26px;
`;

const TrayChevron = styled.button`
  margin-right: 13px;
`;

const Clock = styled.div`
  margin-left: 8px;
  font-size: 15px;
  line-height: 20px;
  text-align: right;
`;

const dockerDisc = (
  <Disc $bg="#1d8fe8">
    <FaDocker size={21} color="#fff" />
  </Disc>
);

const apps = [
  {
    name: "Iniciar",
    icon: (
      <svg width="30" height="30" viewBox="0 0 30 30">
        <defs>
          <linearGradient id="win" x1="0" y1="0" x2="1" y2="1">
            <stop offset="0" stopColor="#84e0ff" />
            <stop offset="1" stopColor="#0a96ee" />
          </linearGradient>
        </defs>
        <path d="M0 0h14.500v14.500H0zM15.500 0H30v14.500H15.500zM0 15.500h14.500V30H0zM15.500 15.500H30V30H15.500z" fill="url(#win)" />
      </svg>
    ),
  },
  {
    name: "Pesquisar",
    icon: (
      <svg width="28" height="28" viewBox="0 0 28 28">
        <path d="m20 20 6 6.500" stroke="#d8d8dc" strokeWidth="3.500" strokeLinecap="round" />
        <circle cx="12.500" cy="12" r="10.500" fill="#544650" stroke="#dfdfe3" strokeWidth="2.600" />
      </svg>
    ),
  },
  {
    name: "Explorador de Arquivos",
    icon: (
      <svg width="30" height="28" viewBox="0 0 30 28">
        <path d="M0 2a2 2 0 0 1 2-2h8l3 4v5H0z" fill="#dc9a0c" />
        <path d="M0 7h10l3-3h15a2 2 0 0 1 2 2v19a2 2 0 0 1-2 2H2a2 2 0 0 1-2-2z" fill="#fdcf48" />
        <path d="M5 27v-6a2.500 2.500 0 0 1 2.500-2.500h15A2.500 2.500 0 0 1 25 21v6z" fill="#1478cc" />
        <path d="M9 23h12" stroke="#0a4a86" strokeWidth="1.500" />
      </svg>
    ),
  },
  {
    name: "Visual Studio Code",
    state: "open",
    icon: (
      <svg width="30" height="30" viewBox="0 0 30 30">
        <path d="M22 7.500 3 22.500 0 20 21 0z" fill="#0a78c2" />
        <path d="M22 22.500 3 7.500 0 10l21 20z" fill="#0b8bd9" />
        <path d="M21 0 30 4v22l-9 4z" fill="#2aa5ee" />
      </svg>
    ),
  },
  {
    name: "Busca",
    icon: (
      <Disc $bg="#2036b8" $r="9px">
        <svg width="22" height="22" viewBox="0 0 22 22" fill="none" stroke="#fff" strokeWidth="1.800">
          <path d="M13 4.500A6 6 0 1 0 13 15l4.500 4.500" />
          <path d="M10 7h10M10 10h8M12 13h4" strokeWidth="1.200" />
        </svg>
      </Disc>
    ),
  },
  {
    name: "Edge",
    state: "open",
    icon: (
      <svg width="30" height="30" viewBox="0 0 30 30">
        <defs>
          <linearGradient id="ed" x1="0" y1="0" x2="1" y2=".4">
            <stop offset="0" stopColor="#1a8fd8" />
            <stop offset=".6" stopColor="#35c1cc" />
            <stop offset="1" stopColor="#6fe04f" />
          </linearGradient>
        </defs>
        <circle cx="15" cy="15" r="15" fill="#0c59a4" />
        <path d="M0 14C1 5 8 0 15 0c9 0 15 6 15 12.500 0 4-3 7-7 7-3 0-5-1-5-2.200 0-.8 1-1.300 1-3.300 0-3.500-3.500-6-8-6-5 0-9 2.500-11 6z" fill="url(#ed)" />
        <path d="M11 11c-4 3-4 9-1 13 2.500 3.500 6 5 10 4.500 3-.5 6-3 7.500-5.500-6 3-14 1-15.500-5-.8-3 .5-5 1-6-.5-.7-1.200-1-2-1z" fill="#1b7fd0" />
        <path d="M14 16c0 5 5 7.500 10 6.800 2-.3 4-1.300 5.500-2.800l1-2.500-5 2c-3 1-7.500 0-7.500-2.200 0-.8 1-1.300 1-3.300 0-1-.5-2-1-2.500-2 .5-4 2-4 4.500z" fill="#35262a" />
      </svg>
    ),
  },
  {
    name: "Postman",
    icon: (
      <Disc $bg="#ff6c37">
        <svg width="22" height="22" viewBox="0 0 22 22">
          <path d="m15 6 2 2-6 6-6 5 4-7z" fill="#fff" />
          <circle cx="18" cy="4" r="2.500" fill="#fff" />
        </svg>
      </Disc>
    ),
  },
  {
    name: "Discord",
    icon: (
      <Disc $bg="#5865f2">
        <FaDiscord size={19} color="#fff" />
      </Disc>
    ),
  },
  { name: "Docker", icon: dockerDisc },
  {
    name: "PowerShell",
    icon: (
      <svg width="30" height="24" viewBox="0 0 30 24">
        <path d="M6 1h22a1.500 1.500 0 0 1 1.500 2l-4 18.500A2 2 0 0 1 23.500 23h-22A1.500 1.500 0 0 1 .5 21L4 2.500A2 2 0 0 1 6 1z" fill="#4a7edb" />
        <path d="m9 5 8 7-10 7M16 18.500h6" fill="none" stroke="#fff" strokeWidth="2.400" />
      </svg>
    ),
  },
  {
    name: "Ferramenta de Captura",
    state: "focus",
    icon: (
      <svg width="30" height="30" viewBox="0 0 30 30" fill="none">
        <rect width="21" height="22" rx="2.500" fill="#f0f0f2" />
        <path d="M4 14V4h12v6" stroke="#d83b01" strokeWidth="2.500" strokeDasharray="3 1.500" />
        <path d="M18 8v14M6 18.500h18" stroke="#9a9a9e" strokeWidth="2.500" />
        <circle cx="27" cy="16.500" r="2.500" stroke="#2aa0e0" strokeWidth="1.600" />
        <circle cx="16" cy="26.500" r="2.500" stroke="#2aa0e0" strokeWidth="1.600" />
        <path d="m17 24 3-4 5-2" stroke="#2aa0e0" strokeWidth="2" />
      </svg>
    ),
  },
  {
    name: "IntelliJ IDEA",
    icon: (
      <svg width="30" height="30" viewBox="0 0 30 30">
        <path d="M2 3 10 0l8 5-6 12-9-4z" fill="#fc9a3a" />
        <path d="M18 5 23 1l7 7-1 16-9 5-6-6z" fill="#14a3f0" />
        <path d="m4 8 6 5v14l-5 2-4-7z" fill="#f5327e" />
        <path d="m8 24 8 2 6 1-7 3-6-2z" fill="#9a4be0" />
        <rect x="6" y="6" width="18" height="18" fill="#0b0b0b" />
        <path d="M8.500 8.500h4M10.500 8.500v6M8.500 14.500h4M14 8.500h4v4.500a1.700 1.700 0 0 1-3.500.7M8.500 21h6" fill="none" stroke="#fff" strokeWidth="1.500" />
      </svg>
    ),
  },
  { name: "Docker Desktop", state: "open", icon: dockerDisc },
];

const WindowsBar = () => (
  <Taskbar>
    <Apps>
      {apps.map((a) => (
        <AppButton key={a.name} $state={a.state} aria-label={a.name}>
          {a.icon}
        </AppButton>
      ))}
    </Apps>
    <Tray>
      <TrayChevron aria-label="Mostrar ícones ocultos">
        <svg width="14" height="9" viewBox="0 0 14 9" fill="none" stroke="#fff" strokeWidth="1.800">
          <path d="m1 8 6-6 6 6" />
        </svg>
      </TrayChevron>
      <Thin>
        <path d="M1 8c5-5.500 13-5.500 18 0M4 11c3.500-4 8.500-4 12 0M6.800 13.700c2-2.200 4.400-2.200 6.400 0" strokeWidth="1.600" />
        <circle cx="10" cy="16" r="1.300" fill="#fff" />
      </Thin>
      <Thin>
        <path d="M1 7.500v5h3l4.500 4v-13L4 7.500zM11.500 7c1.300 2 1.300 4 0 6M14 5c2.500 3 2.500 7 0 10M16.500 3c3.500 4 3.500 10 0 14" />
      </Thin>
      <Thin>
        <path d="M8 5h7a2 2 0 0 1 2 2v7a2 2 0 0 1-2 2H4a2 2 0 0 1-2-2v-3M19 8.500v4" strokeWidth="1.700" />
        <path d="M9 8h5v5H6z" fill="#fff" />
        <path d="M4 0 1 6h3L2.500 10 7 4.500H4.500L6 0z" fill="#fff" stroke="none" />
      </Thin>
      <Clock>
        <div>17:48</div>
        <div>24/01/2024</div>
      </Clock>
      <svg width="18" height="20" viewBox="0 0 18 20" fill="#f0b8f0">
        <path d="M9 0c4 0 6.500 3 6.500 6.500V12l1.500 3.500H1L2.500 12V6.500C2.500 3 5 0 9 0zM6 17h6c-.3 1.500-1.500 2.500-3 2.500S6.300 18.500 6 17z" />
      </svg>
    </Tray>
  </Taskbar>
);

export default function App() {
  return (
    <>
      <GlobalStyle />
      <Screen>
        <Strip />
        <AddressBar />
        <Middle>
          <Console />
          <Side />
        </Middle>
        <WindowsBar />
      </Screen>
    </>
  );
}
